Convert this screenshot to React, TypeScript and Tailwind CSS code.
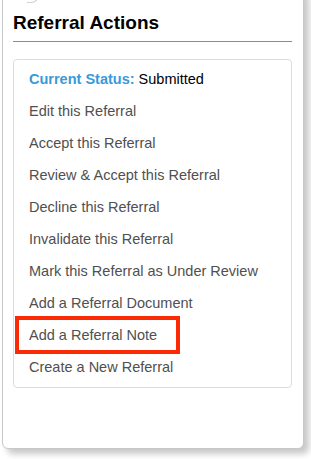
import React from "react";

const items = [
  "Edit this Referral",
  "Accept this Referral",
  "Review & Accept this Referral",
  "Decline this Referral",
  "Invalidate this Referral",
  "Mark this Referral as Under Review",
  "Add a Referral Document",
  "Add a Referral Note",
  "Create a New Referral",
];

export default function App() {
  return (
    <div
      className="w-[311px] h-[459px] overflow-hidden bg-white relative"
      style={{ fontFamily: '"Liberation Sans", Arial, Helvetica, sans-serif' }}
    >
      <div className="ml-[2px] mt-[-12px] w-[302px] h-[461px] rounded-[6px] border border-[#c8c8c8] bg-white shadow-[5px_5px_6px_rgba(0,0,0,0.22)] pl-[10px] pr-[11px] pt-[22px] relative">
        <div className="absolute left-[24px] top-[6px] w-[12px] h-[8px] border-b border-r border-[#d0d0d0] rounded-br-[8px] bg-white" />
        <h2 className="text-[19px] leading-[24px] font-bold text-black">Referral Actions</h2>
        <div className="mt-[6px] h-px bg-[#8c8c8c]" />
        <div className="mt-[17px] border border-[#dcdcdc] rounded-[4px] pt-[3px] pb-[4px] relative">
          <div className="pl-[15px] text-[14.5px] leading-[32px]">
            <span className="font-bold text-[#3a99d8]">Current Status:</span>{" "}
            <span className="text-black">Submitted</span>
          </div>
          {items.map((t) => (
            <div key={t} className="pl-[15px] text-[14.5px] leading-[32px] text-[#505050] relative">
              {t}
              {t === "Add a Referral Note" && (
                <span className="absolute left-[1px] top-[-3px] w-[165px] h-[38px] border-[4px] border-[#fa2a05]" />
              )}
            </div>
          ))}
        </div>
      </div>
    </div>
  );
}
